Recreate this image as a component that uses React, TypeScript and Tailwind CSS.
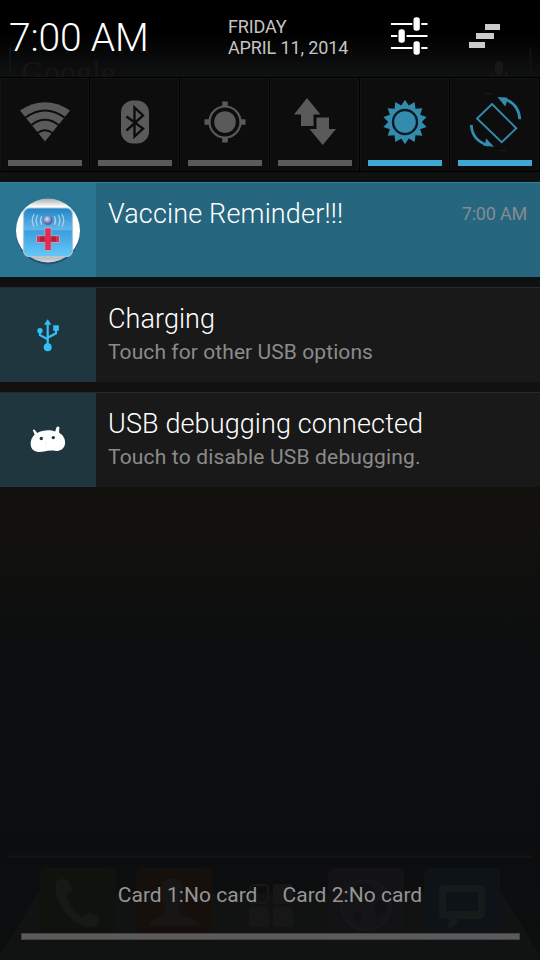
import type { ReactNode } from "react";

function Tile({ on = false, children }: { on?: boolean; children: ReactNode }) {
  return (
    <div className="flex h-[95px] w-[90px] flex-col items-center border-y border-black bg-[#0d0d0d] shadow-[inset_-1px_0_0_#000,inset_1px_1px_0_#131313,inset_-2px_0_0_#141414]">
      <svg className="h-[82px] w-[90px] shrink-0" viewBox="0 78 90 82" fill={on ? "#338bae" : "#5a5a5a"}>
        {children}
      </svg>
      <div className={on ? "h-[6px] w-[74px] bg-[#3fa7d2]" : "h-[6px] w-[74px] bg-[#5a5a5a]"} />
    </div>
  );
}

function Notification({
  icon,
  title,
  titleClass,
  detail,
  detailClass = "",
  time,
  highlight = false,
}: {
  icon: ReactNode;
  title: string;
  titleClass: string;
  detail?: string;
  detailClass?: string;
  time?: string;
  highlight?: boolean;
}) {
  return (
    <div
      className={
        highlight
          ? "flex h-[95px] border-t border-[#338099] bg-[#26667f]"
          : "flex h-[95px] border-t border-[#2a2a2a] bg-[#191919]"
      }
    >
      <div
        className={
          highlight
            ? "h-[94px] w-24 shrink-0 bg-[#297592]"
            : "h-[94px] w-24 shrink-0 bg-[#1f363f]"
        }
      >
        {icon}
      </div>
      <div className="flex flex-1 flex-col pl-3 pr-[13px] pt-[15px]">
        <div className="flex items-center justify-between">
          <span className={`whitespace-nowrap text-[27px] font-light leading-8 text-white ${titleClass}`}>{title}</span>
          {time && <span className="text-[18px] leading-8 tracking-[-0.2px] text-[#848d91]">{time}</span>}
        </div>
        {detail && (
          <span className={`mt-[3px] whitespace-nowrap text-[21px] leading-7 text-[#8b8b8b] ${detailClass}`}>{detail}</span>
        )}
      </div>
    </div>
  );
}

function VaccineIcon() {
  return (
    <svg className="h-[94px] w-24" viewBox="0 183 96 94">
      <defs>
        <linearGradient id="disc" x1="0" y1="0" x2="0" y2="1">
          <stop offset="0" stopColor="#aaa" />
          <stop offset=".13" stopColor="#fff" />
          <stop offset=".85" stopColor="#fff" />
          <stop offset=".93" stopColor="#bbb" />
          <stop offset="1" stopColor="#ddd" />
        </linearGradient>
        <linearGradient id="pane" x1="0" y1="0" x2="0" y2="1">
          <stop offset="0" stopColor="#2584c6" />
          <stop offset=".45" stopColor="#62b6e8" />
          <stop offset=".47" stopColor="#3a9edf" />
          <stop offset="1" stopColor="#67c8f6" />
        </linearGradient>
        <radialGradient id="ball" cx=".4" cy=".35">
          <stop offset="0" stopColor="#e4e6f6" />
          <stop offset="1" stopColor="#5868a8" />
        </radialGradient>
      </defs>
      <circle cx="48" cy="232.500" r="32" fill="#174a60" opacity=".7" />
      <circle cx="48" cy="230.500" r="32" fill="url(#disc)" />
      <rect x="23.500" y="208" width="49" height="48.500" rx="6" fill="url(#pane)" stroke="#a8c8dc" strokeWidth="1.200" />
      <path d="M41.500 216.500q-2 4 0 8M37.500 215.500q-3 5 0 10M34 214.500q-3.500 6 0 12M54.500 216.500q2 4 0 8M58.500 215.500q3 5 0 10M62 214.500q3.500 6 0 12" fill="none" stroke="#a5d3ef" strokeWidth="1.200" strokeLinecap="round" />
      <circle cx="48" cy="220.500" r="4.700" fill="url(#ball)" />
      <path d="M44.800 228h6.400v7.800h8.300v6.700h-8.300v8h-6.400v-8h-8.300v-6.700h8.300z" fill="#e02f4c" stroke="#a0acd8" strokeWidth="1" />
      <path d="M40 236.500h4.500v5H40zM51.500 236.500H56v5h-4.500z" fill="#a82340" />
    </svg>
  );
}

function UsbIcon() {
  return (
    <svg className="h-[94px] w-24" viewBox="0 288 96 94" fill="#33bff8">
      <path d="M47.700 319.300l3.700 5.400h-7.400z" />
      <circle cx="47.700" cy="347.300" r="4" />
      <circle cx="40" cy="330.800" r="2.700" />
      <path d="M53.200 325.300h5.600v5.500h-5.600z" />
      <path d="M47.700 323v22M40 331v4.200l7.700 4M56 330v3.300l-8.300 4.500" fill="none" stroke="#33bff8" strokeWidth="2.200" />
    </svg>
  );
}

function DebugIcon() {
  return (
    <svg className="h-[94px] w-24" viewBox="0 393 96 94">
      <path d="M32.800 430q1.300-1.200 2.400.6l2 2.500c5-3.200 13-3.700 18-1.600l1.200-4q1.200-1.800 3-.6l-.4 5.600c4.500 3 6.400 6.500 6.100 11-.5 5-4.600 7.500-9.100 7.500-4-.8-8-.6-12 .6-5.500 1.300-11.500.2-13-5.100-1-5 .6-9 3.700-11.700z" fill="#fff" />
      <circle cx="41.300" cy="438.500" r="1.700" fill="#1f363f" />
      <circle cx="53.300" cy="437.600" r="1.700" fill="#1f363f" />
      <path d="M45 443h1M49.500 442.500h1M45.500 446h.7" stroke="#ddd" strokeWidth=".7" />
    </svg>
  );
}

/* Dimmed home screen dock that shows through the shade. */
function Dock() {
  return (
    <svg className="absolute inset-0 h-[120px] w-[540px]" viewBox="0 840 540 120">
      <path d="M8 856.500h524" stroke="#151515" strokeWidth="2" />
      <path d="M0 955l38-62h464l38 62v5H0z" fill="#111212" />
      <rect x="40" y="868" width="76" height="74" rx="6" fill="#10130d" />
      <rect x="136" y="868" width="76" height="74" rx="6" fill="#16100d" />
      <rect x="328" y="868" width="76" height="74" rx="6" fill="#131315" />
      <rect x="424" y="868" width="76" height="74" rx="6" fill="#0d1316" />
      <path d="M56 882q6-6 13-1l3 9-6 6q5 14 15 21l8-4 10 4q2 7-6 10c-17 2-41-22-37-45z" fill="#171917" />
      <path d="M149 925q2-7 15-10l2-6q-6-9-5-20 2-11 11-11t11 11q1 11-5 20l2 6q16 3 19 10z" fill="#181615" />
      <g fill="#171717">
        <rect x="273" y="884" width="20" height="20" rx="3" />
        <rect x="249" y="907" width="20" height="20" rx="3" />
        <rect x="273" y="907" width="20" height="20" rx="3" />
      </g>
      <rect x="250" y="885" width="18" height="18" rx="3" fill="none" stroke="#171717" strokeWidth="2" />
      <circle cx="366" cy="905" r="25" fill="#151517" stroke="#18181a" strokeWidth="2" />
      <path d="M354 887l11-5 10 7-8 13-11-3zM374 905l10-8 2 13-10 8zM352 914l8-3 3 9-7 2z" fill="#111113" />
      <path d="M444 885h36q5 0 5 5v24q0 5-5 5h-21q-4 9-13 9 4-4 3-9h-5q-5 0-5-5v-24q0-5 5-5zm2 7v19h32v-19z" fill="#151a1b" fillRule="evenodd" />
    </svg>
  );
}

const sunPoints = Array.from({ length: 28 }, (_, i) => {
  const r = i % 2 === 0 ? 22.2 : 16.8;
  const a = (i * Math.PI) / 14 - Math.PI / 2;
  return `${45 + r * Math.cos(a)},${122 + r * Math.sin(a)}`;
}).join(" ");

export default function App() {
  return (
    <div className="flex h-[960px] w-[540px] flex-col overflow-hidden bg-[linear-gradient(#0e1012_0px,#0e1012_280px,#12110f_390px,#12110e_530px,#0c0e0f_650px,#0b0d0f_850px,#0d0e0e_960px)] font-[Roboto,sans-serif]">
      <header className="relative flex h-[77px] shrink-0 overflow-hidden bg-[linear-gradient(#000_0,#000_32px,#0f1011_75px)] text-white">
        <div className="absolute left-[21px] top-[52px] font-[Liberation_Serif,serif] text-[32px] leading-10 text-[#151616]">Google</div>
        <svg className="absolute left-0 top-0 h-[77px] w-[540px]" viewBox="0 0 540 77" fill="none">
          <path d="M10 48v29M530.500 48v29" stroke="#111212" strokeWidth="2" />
          <rect x="495" y="61" width="8" height="15" rx="4" fill="#171717" />
          <path d="M491 72q1 7 8 7t8-7" stroke="#171717" strokeWidth="2" />
        </svg>
        <div className="relative w-[228px] whitespace-nowrap pl-[9px] text-[39px] font-light leading-[77px] tracking-[-0.15px]">7:00 AM</div>
        <div className="relative w-[150px] whitespace-nowrap pt-[16px] text-[18px] leading-[21px] tracking-[-0.13px] text-[#c4c4c4]">
          <div>FRIDAY</div>
          <div>APRIL 11, 2014</div>
        </div>
        <svg className="relative h-[77px] w-[162px]" viewBox="378 0 162 77" fill="#fff">
          <path d="M391 23h21.300v2H391zM421.300 23H427.500v2h-6.200zM391 35h6.300v2H391zM406.500 35h21v2h-21zM391 47h21.300v2H391zM421.300 47h6.200v2h-6.200z" />
          <rect x="413.500" y="17.300" width="6.300" height="13.400" rx="2.600" />
          <rect x="398.500" y="29.300" width="6.300" height="13.400" rx="2.600" />
          <rect x="413.500" y="41.300" width="6.300" height="13.400" rx="2.600" />
          <path d="M485 24h15v6h-15zM476 33h18v6h-18zM469 42h16v6h-16z" fill="#cbcbcb" />
        </svg>
      </header>

      <div className="flex shrink-0">
        <Tile>
          <path d="M20 110.500Q45 94 70 110.500L45 141.500z" />
          <path d="M25.500 117.500Q45 103.500 64.500 117.500M31.500 125Q45 114.500 58.500 125M37.500 133Q45 127.500 52.500 133" fill="none" stroke="#0d0d0d" strokeWidth="2" />
        </Tile>
        <Tile>
          <rect x="31" y="100.500" width="28" height="43" rx="12" />
          <path d="M36.500 116.500L53 128.500 44.500 136.500V107.500L53 115.500 36.500 130.500" fill="none" stroke="#0d0d0d" strokeWidth="2.400" />
        </Tile>
        <Tile>
          <circle cx="45" cy="122" r="10.800" />
          <circle cx="45" cy="122" r="15.500" fill="none" stroke="#5a5a5a" strokeWidth="2.200" />
          <path d="M42.200 101.500h5.600v5.500h-5.600zM42.200 137h5.600v5.500h-5.600zM24.500 119.200H30v5.600h-5.500zM60 119.200h5.500v5.600H60z" />
        </Tile>
        <Tile>
          <path d="M37 98l13.500 16.500H43.500V126H31v-11.500h-7zM46.500 117.500H59V129h7L52.700 145 39.500 129h7z" />
        </Tile>
        <Tile on>
          <polygon points={sunPoints} />
          <circle cx="45" cy="122" r="12" fill="#338bae" stroke="#0d1a20" strokeWidth="2.400" />
        </Tile>
        <Tile on>
          <path d="M42 104l24.300 24.300-14.600 14-24.700-23.800z" fill="none" stroke="#338bae" strokeWidth="1.900" />
          <path d="M53 98.500q16 5 16.700 20.800M21.300 125q1 16 17 20.200" fill="none" stroke="#338bae" strokeWidth="2.800" />
          <path d="M47.500 97l10 .7-.8 4.300-1.500 4.500zM44 146.700l-10.500-1 2-3 .5-4.500z" />
          <path d="M35 93.500h7M49 150.500h7" stroke="#12201f" strokeWidth="1" />
        </Tile>
      </div>

      <main className="flex flex-1 flex-col gap-[10px] pt-[10px]">
        <Notification highlight icon={<VaccineIcon />} title="Vaccine Reminder!!!" titleClass="tracking-[0.16px]" time="7:00 AM" />
        <Notification icon={<UsbIcon />} title="Charging" titleClass="tracking-[0.05px]" detail="Touch for other USB options" detailClass="tracking-[0.08px]" />
        <Notification icon={<DebugIcon />} title="USB debugging connected" titleClass="tracking-[0.12px]" detail="Touch to disable USB debugging." detailClass="tracking-[0.17px]" />
      </main>

      <footer className="relative flex h-[120px] shrink-0 flex-col items-center">
        <Dock />
        <div className="relative flex gap-[25px] whitespace-nowrap pt-[41px] text-[21px] leading-7 tracking-[0.03px] text-[#959595]">
          <span>Card 1:No card</span>
          <span>Card 2:No card</span>
        </div>
        <div className="relative mt-[24px] h-[7px] w-[499px] border border-[#444] bg-[#5b5b5b]" />
      </footer>
    </div>
  );
}
